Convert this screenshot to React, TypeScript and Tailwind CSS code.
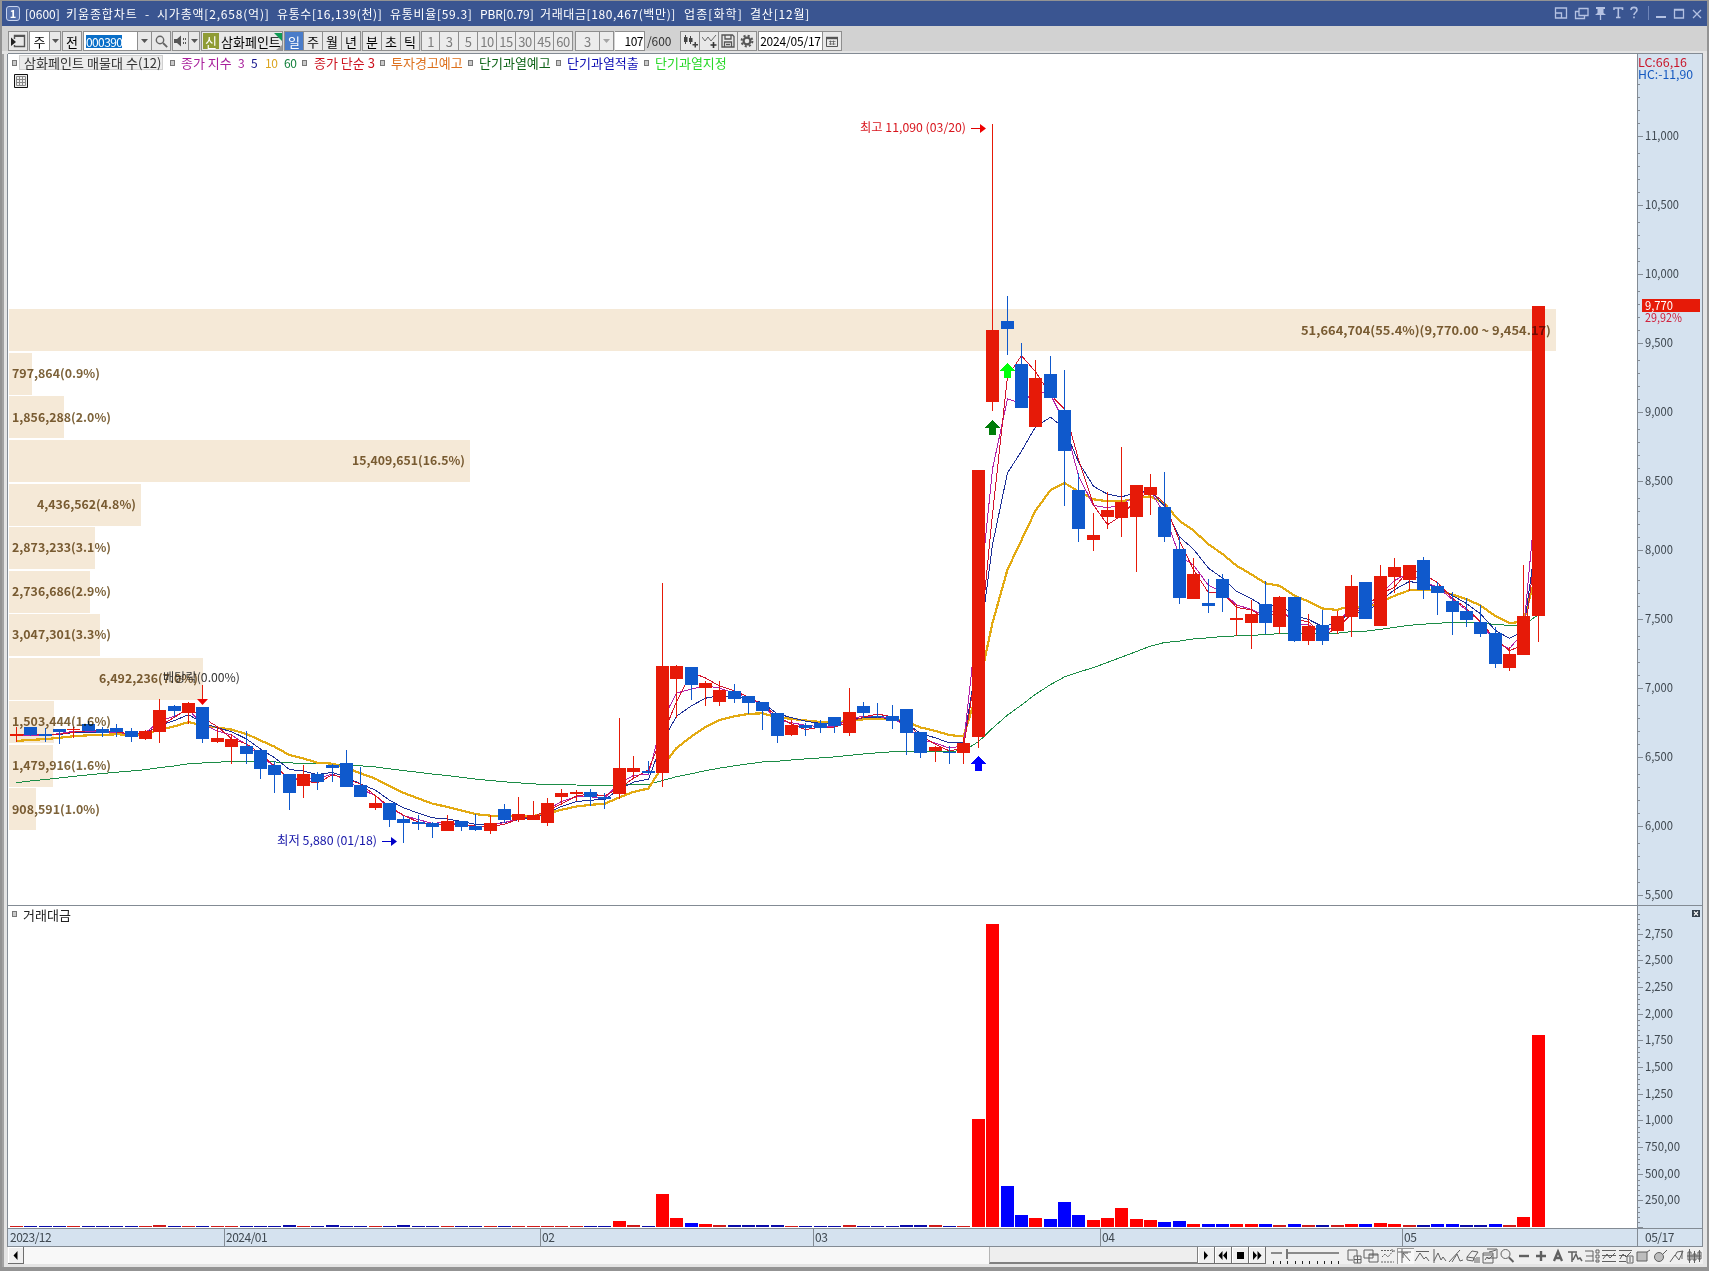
import React from "react";
import clsx from "clsx";

const UP = "#e61a08";
const DOWN = "#0f59cc";
const FONT = '"Noto Sans CJK KR", "Liberation Sans", sans-serif';

// [direction, high, top, bottom, low, turnover height]
type Row = [number, number, number, number, number, number];

const rows: Row[] = [
  [1, 727, 734, 736, 742, 1],
  [0, 727, 727, 735, 736, 1],
  [0, 728, 734, 735.5, 742, 1],
  [0, 729, 729, 732, 744, 1],
  [1, 727, 729, 730, 738, 1],
  [0, 721, 724, 731, 731, 1],
  [0, 727, 729, 733, 737, 1],
  [0, 724, 728, 732, 737, 1],
  [0, 728, 731, 737, 742, 1],
  [1, 730, 731, 739, 740, 1],
  [1, 699, 710, 732, 743, 2],
  [0, 705, 706, 711, 717, 1],
  [1, 702, 703, 713, 724, 1],
  [0, 707, 707, 739, 743, 1],
  [1, 727, 738, 742, 743, 1],
  [1, 734, 739, 747, 764, 1],
  [0, 731, 746, 754, 764, 1],
  [0, 750, 750, 769, 779, 1],
  [0, 761, 765, 775, 793, 1],
  [0, 774, 774, 793, 810, 2],
  [1, 765, 774, 786, 798, 1],
  [0, 772, 774, 782, 790, 1],
  [0, 764, 765, 768, 782, 2],
  [0, 750, 763, 787, 787, 1],
  [0, 767, 785, 797, 797, 1],
  [1, 795, 803, 808, 810, 1],
  [0, 803, 803, 820, 827, 1],
  [0, 816, 819, 823, 843, 2],
  [0, 815, 822, 824, 830, 1],
  [0, 822, 823, 827, 838, 1],
  [1, 815, 821, 831, 831, 1],
  [0, 821, 821, 827, 831, 1],
  [0, 814, 826, 830, 831, 1],
  [1, 815, 823, 831, 834, 1],
  [0, 804, 809, 820, 823, 1],
  [1, 797, 814, 820, 822, 1],
  [1, 801, 815, 820, 820, 1],
  [1, 798, 803, 823, 826, 1],
  [1, 789, 793, 797, 805, 1],
  [1, 790, 792, 794, 801, 1],
  [0, 789, 792, 797, 806, 1],
  [0, 793, 797, 799, 809, 1],
  [1, 718, 768, 794, 799, 6],
  [1, 756, 768, 772, 778, 2],
  [0, 761, 771, 773, 774, 1],
  [1, 583, 666, 773, 787, 33],
  [1, 665, 666, 679, 718, 9],
  [0, 667, 667, 685, 700, 4],
  [1, 681, 683, 688, 706, 3],
  [1, 681, 690, 702, 706, 2],
  [0, 684, 691, 699, 703, 2],
  [0, 696, 696, 703, 714, 2],
  [0, 702, 702, 711, 730, 2],
  [0, 713, 713, 736, 743, 2],
  [1, 720, 725, 735, 736, 1],
  [0, 723, 725, 728, 736, 1],
  [0, 720, 723, 728, 733, 1],
  [0, 717, 717, 726, 733, 1],
  [1, 688, 712, 733, 736, 2],
  [0, 702, 706, 713, 718, 1],
  [0, 703, 716, 717, 718, 1],
  [0, 705, 716, 721, 729, 1],
  [0, 709, 709, 733, 755, 2],
  [0, 732, 732, 753, 758, 2],
  [1, 746, 747, 751, 762, 2],
  [0, 746, 752, 753, 764, 1],
  [1, 737, 743, 753, 764, 1],
  [1, 470, 470, 737, 748, 108],
  [1, 124, 330, 402, 411, 303],
  [0, 296, 321, 329, 355, 41],
  [0, 343, 364, 408, 408, 12],
  [1, 360, 378, 427, 427, 9],
  [0, 356, 374, 398, 398, 8],
  [0, 370, 410, 451, 506, 25],
  [0, 473, 490, 529, 542, 12],
  [1, 513, 535, 540, 551, 7],
  [1, 492, 510, 517, 529, 9],
  [1, 447, 502, 518, 537, 19],
  [1, 485, 485, 517, 572, 8],
  [1, 474, 487, 495, 515, 7],
  [0, 472, 507, 537, 542, 5],
  [0, 537, 549, 598, 604, 6],
  [1, 558, 574, 599, 599, 3],
  [0, 579, 603, 606, 613, 3],
  [0, 574, 579, 598, 612, 3],
  [1, 604, 618, 620, 636, 3],
  [1, 600, 614, 623, 649, 3],
  [0, 581, 604, 623, 634, 3],
  [1, 596, 597, 627, 634, 2],
  [0, 597, 597, 641, 642, 3],
  [1, 614, 626, 641, 645, 2],
  [0, 610, 625, 641, 645, 2],
  [1, 611, 616, 631, 634, 2],
  [1, 575, 586, 617, 637, 3],
  [0, 582, 582, 619, 619, 3],
  [1, 565, 576, 626, 626, 4],
  [1, 558, 567, 577, 593, 3],
  [1, 565, 565, 580, 591, 2],
  [0, 557, 560, 590, 599, 2],
  [0, 582, 586, 593, 615, 3],
  [0, 592, 601, 612, 635, 3],
  [0, 598, 611, 620, 627, 2],
  [0, 605, 622, 634, 637, 2],
  [0, 627, 633, 664, 668, 3],
  [1, 647, 654, 668, 671, 2],
  [1, 565, 616, 655, 655, 10],
  [1, 306, 306, 616, 642, 192],
];

const xAt = (i: number) => Math.floor(16.3 + i * 14.358);
const closes = rows.map((r) => (r[0] ? r[2] : r[3]));

const ema = (n: number, start: number) => {
  let v = start;
  return closes.map((c, i) => {
    if (i > 0) v += ((c - v) * 2) / (n + 1);
    return v;
  });
};

const sma3 = closes.map((c, i) =>
  i < 2 ? c : (c + closes[i - 1] + closes[i - 2]) / 3
);

const toPoints = (vals: number[]) =>
  vals.map((v, i) => `${xAt(i) + 0.5},${v.toFixed(1)}`).join(" ");

const averages = [
  { color: "#1b8c46", width: 1, points: toPoints(ema(60, 782.6)) },
  { color: "#e3aa12", width: 2.2, points: toPoints(ema(10, 741)) },
  { color: "#1d2f96", width: 1, points: toPoints(ema(5, 736)) },
  { color: "#b321a8", width: 1, points: toPoints(ema(3, 735)) },
  { color: "#d3142c", width: 1, points: toPoints(sma3) },
];

// right edge of the bar, label, label start, label width
const profile: [number, string, number, number][] = [
  [1556, "51,664,704(55.4%)(9,770.00 ~ 9,454.17)", 1301, 250],
  [32, "797,864(0.9%)", 12, 88],
  [64, "1,856,288(2.0%)", 12, 99],
  [470, "15,409,651(16.5%)", 352, 113],
  [141, "4,436,562(4.8%)", 37, 99],
  [95, "2,873,233(3.1%)", 12, 99],
  [90, "2,736,686(2.9%)", 12, 99],
  [100, "3,047,301(3.3%)", 12, 99],
  [203, "6,492,236(7.0%)", 99, 99],
  [54, "1,503,444(1.6%)", 12, 99],
  [53, "1,479,916(1.6%)", 12, 99],
  [36, "908,591(1.0%)", 12, 88],
];

const prices = ["11,000", "10,500", "10,000", "9,500", "9,000", "8,500", "8,000", "7,500", "7,000", "6,500", "6,000", "5,500"];
const turnovers = ["2,750", "2,500", "2,250", "2,000", "1,750", "1,500", "1,250", "1,000", "750,00", "500,00", "250,00"];

const Label: React.FC<{
  x: number;
  y: number;
  w: number;
  fill: string;
  bold?: boolean;
  children: string;
}> = ({ x, y, w, fill, bold, children }) => (
  <text
    x={x}
    y={y}
    textLength={w}
    lengthAdjust="spacingAndGlyphs"
    fill={fill}
    fontSize={12}
    fontWeight={bold ? 700 : 400}
    fontFamily={FONT}
  >
    {children}
  </text>
);

const UpArrow: React.FC<{ x: number; y: number; fill: string }> = ({ x, y, fill }) => (
  <path
    d={`M${x} ${y}l7.5 7.5h-4v7h-7v-7h-4z`}
    fill={fill}
    shapeRendering="crispEdges"
  />
);

const PriceChart = () => (
  <svg width={1629} height={852} viewBox="8 54 1629 852" className="block">
    {profile.map(([right], i) => (
      <rect key={i} x={9} y={Math.round(309.3 + i * 43.55)} width={right - 9} height={42} fill="#f5e9d7" />
    ))}
    <g fill="none" shapeRendering="crispEdges">
      {averages.map((a) => (
        <polyline key={a.color} points={a.points} stroke={a.color} strokeWidth={a.width} />
      ))}
    </g>
    <g shapeRendering="crispEdges">
      {rows.map(([up, high, top, bottom, low], i) => (
        <g key={i} fill={up ? UP : DOWN}>
          <rect x={xAt(i)} y={high} width={1} height={low - high} />
          <rect x={xAt(i) - 6} y={top} width={13} height={bottom - top} />
        </g>
      ))}
    </g>
    <g style={{ mixBlendMode: "multiply" }}>
      {profile.map(([, text, x, w], i) => (
        <Label key={text} x={x} y={Math.round(334.5 + i * 43.55)} w={w} fill="#7d633a" bold>
          {text}
        </Label>
      ))}
    </g>

    <Label x={163} y={682} w={77} fill="#333">배당락(0.00%)</Label>
    <path d="M202.5 685v14" stroke={UP} />
    <path d="M197 699h11l-5.5 6z" fill="#f00000" />

    <Label x={860} y={132} w={106} fill="#d8141c">최고 11,090 (03/20)</Label>
    <path d="M971 128.5h10" stroke="#e00000" />
    <path d="M980 124v9l6-4.5z" fill="#f00000" />

    <Label x={277} y={845} w={100} fill="#1414a8">최저 5,880 (01/18)</Label>
    <path d="M382 841.5h10" stroke="#0000c8" />
    <path d="M391 837v9l6-4.5z" fill="#0000c8" />

    <UpArrow x={978.5} y={756} fill="#0000ff" />
    <UpArrow x={992.5} y={420} fill="#007d0a" />
    <UpArrow x={1007.5} y={363} fill="#00ff0a" />
  </svg>
);

const PriceAxis = () => (
  <svg width={66} height={852} viewBox="1637 54 66 852" className="block bg-[#d5e2ef]">
    <path d="M1637.5 54v852M1702.5 54v852" stroke="#838b94" />
    <Label x={1638} y={67} w={49} fill="#c81428">LC:66,16</Label>
    <Label x={1638} y={79} w={55} fill="#1458c0">HC:-11,90</Label>
    {prices.map((p, i) => {
      const y = Math.round(136.3 + i * 68.96);
      return (
        <g key={p}>
          <path d={`M1638 ${y + 0.5}h5`} stroke="#838b94" />
          {[13, 26, 39, 52].map((d) => (
            <path key={d} d={`M1638 ${y - d + 0.5}h2`} stroke="#838b94" />
          ))}
          <Label x={1645} y={y + 3.5} w={p.length > 5 ? 34 : 28} fill="#3f4850">{p}</Label>
        </g>
      );
    })}
    <rect x={1642} y={299} width={58} height={13} fill={UP} />
    <Label x={1645} y={309.5} w={28} fill="#fff">9,770</Label>
    <Label x={1645} y={321.5} w={37} fill="#d0203c">29,92%</Label>
  </svg>
);

const VolumeChart = () => (
  <svg width={1629} height={322} viewBox="8 906 1629 322" className="block" shapeRendering="crispEdges">
    {rows.map(([up, , , , , h], i) => (
      <rect
        key={i}
        x={xAt(i) - 6}
        y={1227 - h}
        width={13}
        height={h}
        fill={up ? (h < 3 ? "#cf1a1a" : "#ff0000") : h < 3 ? "#0a0aa8" : "#0000ff"}
      />
    ))}
  </svg>
);

const VolumeAxis = () => (
  <svg width={66} height={322} viewBox="1637 906 66 322" className="block bg-[#d5e2ef]">
    <path d="M1637.5 906v322M1702.5 906v322" stroke="#838b94" />
    {[...turnovers, ""].map((t, i) => {
      const y = Math.round(933.5 + i * 26.68);
      return (
        <g key={i}>
          <path d={`M1638 ${y + 0.5}h5`} stroke="#838b94" />
          {[5, 10, 15, 20].map((d) => (
            <path key={d} d={`M1638 ${y - d + 0.5}h2`} stroke="#838b94" />
          ))}
          {t && <Label x={1645} y={y + 3.5} w={t.length > 5 ? 35 : 28} fill="#3f4850">{t}</Label>}
        </g>
      );
    })}
    <rect x={1692} y={910} width={8} height={7} fill="#34404c" />
    <path d="M1694 911.5l4 4m0-4l-4 4" stroke="#fff" strokeWidth={1.1} />
  </svg>
);

const titleParts: [string, string][] = [
  ["[0600]", "w-[41px]"],
  ["키움종합차트", "w-[79px] tracking-[0.9px]"],
  ["-", "w-[12px]"],
  ["시가총액[2,658(억)]", "w-[120px] tracking-[0.8px]"],
  ["유통수[16,139(천)]", "w-[113px] tracking-[0.6px]"],
  ["유통비율[59.3]", "w-[90px] tracking-[0.7px]"],
  ["PBR[0.79]", "w-[60px] tracking-[-0.1px]"],
  ["거래대금[180,467(백만)]", "w-[144px] tracking-[0.6px]"],
  ["업종[화학]", "w-[66px] tracking-[1.1px]"],
  ["결산[12월]", "w-[66px] tracking-[0.8px]"],
];

const TitleBar = () => (
  <div className="flex h-[25px] items-center bg-[#3a5591] text-[12px] text-white">
    <div className="ml-[4px] mr-[5px] flex h-[15px] w-[14px] items-center justify-center rounded-[3px] border border-[#c9d4ee] bg-[#5671ad] text-[11px] font-bold">
      1
    </div>
    {titleParts.map(([text, cls]) => (
      <span key={text} className={clsx("shrink-0", cls)}>{text}</span>
    ))}
    <svg className="ml-auto mr-[3px]" width={150} height={18} viewBox="1555 5 150 18" fill="none" stroke="#b4c1e2" strokeWidth={1.3}>
      <path d="M1556.5 8h11v10h-11zM1556.5 13h6v5" />
      <path d="M1580 8.5h9v7h-9zM1579.500 11.500h-3v7h9v-3" />
      <path d="M1597 7h9v2h-1.500v4l2.500 2h-11l2.500-2v-4h-1.500z" fill="#b4c1e2" stroke="none" />
      <path d="M1601.500 14v6" />
      <path d="M1615 10v-2h8.500v2M1619.300 8v9.500M1617 17.500h4.500" strokeWidth={1.6} />
      <path d="M1632 10c0-3.500 6-3.500 6 0 0 2.500-3 2.500-3 5M1635 16.500v1.700" strokeWidth={1.6} />
      <path d="M1649.500 6v14" stroke="#6f85b8" strokeWidth={1} />
      <path d="M1657 17h10" strokeWidth={2} />
      <path d="M1675.500 9.500h9v8.500h-9zM1675 10h10" />
      <path d="M1694 10l8 8m0-8l-8 8" />
    </svg>
  </div>
);

const Cell: React.FC<{ className?: string; children?: React.ReactNode }> = ({ className, children }) => (
  <div
    className={clsx(
      "flex h-[20px] shrink-0 items-center justify-center border border-l-0 border-[#8e8e8e] text-[13px] leading-none text-black first:border-l",
      className
    )}
  >
    {children}
  </div>
);

const Caret: React.FC<{ light?: boolean }> = ({ light }) => (
  <svg width={7} height={4} viewBox="0 0 7 4">
    <path d="M0 0h7L3.500 4z" fill={light ? "#a5a5a5" : "#555"} />
  </svg>
);

const Toolbar = () => (
  <div className="flex h-[25px] items-start bg-[#d2d2d2] pl-[6px] pt-[5px]">
    <div className="flex w-[21px]">
      <Cell className="w-[20px] bg-[#e8e8e8]">
        <svg width={15} height={14} viewBox="0 0 15 14" fill="none" stroke="#555">
          <path d="M3.500 5V1.500h10v11h-10V11" strokeWidth={1.4} />
          <path d="M0 3.500l5 4.500-5 4z" fill="#222" stroke="none" />
          <path d="M3 2h11" strokeWidth={2} />
        </svg>
      </Cell>
    </div>
    <div className="flex w-[33px]">
      <Cell className="w-[21px] bg-white">주</Cell>
      <Cell className="w-[11px] bg-[#e8e8e8]"><Caret /></Cell>
    </div>
    <div className="flex w-[21px]">
      <Cell className="w-[20px] bg-[#e8e8e8]">전</Cell>
    </div>
    <div className="flex w-[89px]">
      <Cell className="w-[55px] justify-start bg-white pl-[2px]">
        <span className="bg-[#0a6fc8] text-[12px] leading-[13px] tracking-[-0.6px] text-white">000390</span>
      </Cell>
      <Cell className="w-[14px] bg-[#e8e8e8]"><Caret /></Cell>
      <Cell className="w-[19px] bg-[#e8e8e8]">
        <svg width={13} height={13} viewBox="0 0 13 13" fill="none" stroke="#666" strokeWidth={1.4}>
          <circle cx={5} cy={5} r={3.700} />
          <path d="M8 8l4.200 4.200" strokeWidth={1.800} />
        </svg>
      </Cell>
    </div>
    <div className="flex w-[29px]">
      <Cell className="w-[17px] bg-[#e8e8e8]">
        <svg width={13} height={12} viewBox="0 0 13 12" fill="#555">
          <path d="M0 4h3l4-3.500v11L3 8H0z" />
          <path d="M9 3h1v2H9zM11 3h1v2h-1zM9 7h1v2H9zM11 7h1v2h-1z" />
        </svg>
      </Cell>
      <Cell className="w-[11px] bg-[#e8e8e8]"><Caret /></Cell>
    </div>
    <div className="flex w-[83px]">
      <Cell className="relative w-[82px] justify-start bg-[#e8e8e8] pl-px">
        <span className="mr-[2px] flex h-[16px] w-[16px] items-center justify-center bg-[#8f9c35] text-white">신</span>
        <span className="whitespace-nowrap">삼화페인트</span>
        <svg className="absolute right-0 top-px" width={8} height={17} viewBox="0 0 8 17">
          <path d="M0 0h8v8z" fill="#0f9a54" />
          <path d="M8 12v5H2z" fill="#999" />
        </svg>
      </Cell>
    </div>
    <div className="flex w-[78px]">
      <Cell className="w-[20px] border-[#4a7cc9] bg-[#4a7cc9] text-white">일</Cell>
      <Cell className="w-[19px] bg-[#e8e8e8]">주</Cell>
      <Cell className="w-[19px] bg-[#e8e8e8]">월</Cell>
      <Cell className="w-[19px] bg-[#e8e8e8]">년</Cell>
    </div>
    <div className="flex w-[59px]">
      <Cell className="w-[20px] bg-[#e8e8e8]">분</Cell>
      <Cell className="w-[19px] bg-[#e8e8e8]">초</Cell>
      <Cell className="w-[19px] bg-[#e8e8e8]">틱</Cell>
    </div>
    <div className="flex w-[154px]">
      {["1", "3", "5", "10", "15", "30", "45", "60"].map((n) => (
        <Cell key={n} className="w-[19px] bg-[#ececec] text-[12px] tracking-[-0.5px] text-[#7d7d7d]!">{n}</Cell>
      ))}
    </div>
    <div className="flex w-[40px]">
      <Cell className="w-[25px] bg-[#ececec] text-[12px] text-[#7d7d7d]!">3</Cell>
      <Cell className="w-[14px] bg-[#ececec]"><Caret light /></Cell>
    </div>
    <Cell className="w-[30px] justify-end border-l bg-white pr-[1px] text-[12px]! tracking-[-0.5px]">107</Cell>
    <span className="w-[35px] pl-[2px] text-[12px] leading-[19px] tracking-[-0.1px] text-[#333]">/600</span>
    <div className="flex w-[78px]">
      <Cell className="w-[20px] bg-[#e8e8e8]">
        <svg width={15} height={15} viewBox="0 0 15 15" fill="#444">
          <path d="M1 3h3.500v5H1zM2 1h1v9H2zM6 4h3.500v4H6zM7 2h1v8H7zM9.500 10h2V8h1.500v2h2v1.500h-2v2h-1.500v-2h-2z" />
        </svg>
      </Cell>
      <Cell className="w-[19px] bg-[#e8e8e8]">
        <svg width={15} height={15} viewBox="0 0 15 15" fill="none" stroke="#666">
          <path d="M0 3l3 4 3-4 3 4 5-6" />
          <path d="M11.500 8v6M8.500 11h6" stroke="#333" strokeWidth={1.600} />
        </svg>
      </Cell>
      <Cell className="w-[19px] bg-[#e8e8e8]">
        <svg width={14} height={14} viewBox="0 0 14 14" fill="none" stroke="#555" strokeWidth={1.300}>
          <path d="M1 1h10.500L13 2.500V13H1zM4 1v4h6V1M3.500 13V8h7v5M5 10.500h4" />
        </svg>
      </Cell>
      <Cell className="w-[19px] bg-[#e8e8e8]">
        <svg width={14} height={14} viewBox="0 0 14 14" fill="none" stroke="#555">
          <circle cx={7} cy={7} r={3.400} strokeWidth={2.200} />
          <circle cx={7} cy={7} r={5.400} strokeWidth={2} strokeDasharray="2.120 2.120" />
        </svg>
      </Cell>
    </div>
    <div className="flex">
      <Cell className="w-[65px] bg-white text-[12px]! tracking-[-0.2px]">2024/05/17</Cell>
      <Cell className="w-[19px] bg-[#e8e8e8]">
        <svg width={12} height={11} viewBox="0 0 12 11" fill="none" stroke="#555">
          <path d="M.5 1.500h11v9H.5z" />
          <path d="M3 5.500h6.500M3 8h6.500M4.500 4.500v4.500M7.500 4.500v4.500" strokeWidth={0.7} />
          <path d="M0 2h12" strokeWidth={2.400} />
        </svg>
      </Cell>
    </div>
  </div>
);

const Marker: React.FC<{ className: string }> = ({ className }) => (
  <i className={clsx("block h-[6px] w-[5px] shrink-0 border border-[#777] bg-[#c9c9c9]", className)} />
);

const Legend = () => (
  <div className="absolute left-[4px] top-0 flex h-[17px] items-center whitespace-nowrap text-[13px] leading-none">
    <Marker className="mr-[2px]" />
    <span className="flex h-[15px] w-[144px] items-center border border-[#cfcfcf] bg-[#ececec] pl-[4px] tracking-[0.05px] text-[#333]">
      삼화페인트 매물대 수(12)
    </span>
    <Marker className="ml-[7px] mr-[6px]" />
    <span className="w-[57px] text-[#a8209c]">종가 지수</span>
    <span className="w-[13px] text-[12px] text-[#a8209c]">3</span>
    <span className="w-[14px] text-[12px] text-[#14148c]">5</span>
    <span className="w-[19px] text-[12px] tracking-[-0.5px] text-[#dba520]">10</span>
    <span className="w-[18px] text-[12px] tracking-[-0.5px] text-[#12803c]">60</span>
    <Marker className="mr-[7px]" />
    <span className="w-[66px] text-[#cc1420]">종가 단순 3</span>
    <Marker className="mr-[6px]" />
    <span className="w-[77px] text-[#dd701c]">투자경고예고</span>
    <Marker className="mr-[6px]" />
    <span className="w-[77px] text-[#0f6418]">단기과열예고</span>
    <Marker className="mr-[6px]" />
    <span className="w-[77px] text-[#0f0fb4]">단기과열적출</span>
    <Marker className="mr-[6px]" />
    <span className="text-[#28d828]">단기과열지정</span>
  </div>
);

const TimeAxis = () => (
  <div className="flex h-[19px] border-y border-[#838b94] bg-[#d5e2ef] text-[12px] leading-[15px] tracking-[-0.5px] text-[#3f4850] [&>span]:shrink-0 [&>span]:pl-px [&>span+span]:border-l [&>span+span]:border-[#838b94]">
    <span className="w-[216px] pl-[2px]!">2023/12</span>
    <span className="w-[316px]">2024/01</span>
    <span className="w-[273px]">02</span>
    <span className="w-[287px]">03</span>
    <span className="w-[302px]">04</span>
    <span className="w-[235px]">05</span>
    <span className="w-[66px] border-r border-r-[#838b94] pl-[7px]!">05/17</span>
  </div>
);

const tools = [
  <path d="M2 2h9v6M2 2v10h5M8 8h7v7H8zM8 11.500h7M11.500 8v7" />,
  <path d="M1 2h9v8H1zM6 6h9v8H6zM6 7h9" />,
  <path d="M1 2.500h10M1 14h13M2 9l3-3 3 3 5-6M11 2h3v3" strokeDasharray="2 1" />,
  <path d="M1 4h13M5 1v14M6 5l7 8M6 5v5M6 5h5" />,
  <path d="M2 3.500h13M1 13l5-8 4 6 2-2 3 4" />,
  <path d="M3 1v14M3 13l4-8 3 7 2-3 3 4" />,
  <path d="M1 14L12 2M4 14l5-8 3 7 3-1" />,
  <path d="M2 9l5-6 6 1-4 6zM2 9v3l6 1 1-3M10 10v5M12 9v6M14 9v6" />,
  <path d="M5 1h10v9H5M1 5h10v10H1zM1 7h10M3 12l2-3 2 2 3-3M7 4l4-1 3-1" />,
  <g><circle cx={6.500} cy={6} r={4.500} /><path d="M10 9.500l4.500 4.500" strokeWidth={2} /></g>,
  <path d="M3 8h10" strokeWidth={2.400} />,
  <path d="M3 8h10M8 3v10" strokeWidth={2.400} />,
  <path d="M4 13L8 3.500 12 13M5.500 10h5" strokeWidth={2.300} />,
  <path d="M1 4h9M5 4v10M6 12l3-6 2 5 2-1 2 3" strokeWidth={1.500} />,
  <path d="M1 3h8M2 8h7M1 13h9M9 3v10M12 2h3v3h-3zM12 7h3v3h-3zM12 12h3v2h-3z" />,
  <path d="M1 2.500h14M1 7.500h14M1 13.500h14M2 11l4-5 3 4 5-5" />,
  <path d="M1 2.500h13M1 7.500h7M1 13.500h7M2 11l3-5 3 3 5-5M9 8h6v7H9zM12 9v5" />,
  <path d="M2 4h10v9H2zM12 4l3-2" fill="#bdbdbd" />,
  <g><circle cx={7} cy={9} r={4.500} fill="#bdbdbd" /><path d="M11 6l4-4" /></g>,
  <path d="M1 14l5-7 4 5 4-9-6 1-2 4M13 3v8" />,
  <path d="M2 4h3v8H2zM3.500 1v14M7 6h3v6H7zM8.500 3v12M12 4h3v7h-3zM13.500 2v12M1 8h14" />,
];

const ScrollButton: React.FC<{ className?: string; d: string }> = ({ className, d }) => (
  <div className={clsx("flex h-[17px] shrink-0 items-center justify-center border-b border-r border-[#6e6e6e] bg-[#f0f0f0] shadow-[inset_1px_1px_0_#fff]", className)}>
    <svg width={10} height={9} viewBox="0 0 10 9"><path d={d} fill="#000" /></svg>
  </div>
);

const BottomBar = () => (
  <div className="flex h-[17px] bg-[#efefef]">
    <ScrollButton className="w-[16px]" d="M6.500 0v9L2.500 4.500z" />
    <div className="w-[965px] shrink-0 bg-[#f8f8f8]" />
    <div className="w-[209px] shrink-0 border-b-2 border-l border-r border-[#808080] border-l-[#b5b5b5] bg-[#eeeeee]" />
    <ScrollButton className="w-[17px]" d="M3 0v9l4-4.500z" />
    <ScrollButton className="w-[17px]" d="M4.500 0v9L.5 4.500zM9 0v9L5 4.500z" />
    <ScrollButton className="w-[17px]" d="M2 1h7v7H2z" />
    <ScrollButton className="w-[17px]" d="M1 0v9l4-4.500zM5.500 0v9l4-4.500z" />
    <svg className="ml-[5px] shrink-0" width={75} height={17} viewBox="0 0 75 17" shapeRendering="crispEdges">
      <path d="M0 5.500h68" stroke="#8a8a8a" strokeWidth={2} />
      <path d="M11 2h5v10h-5z" fill="#f0f0f0" />
      <path d="M15.500 2v10" stroke="#777" strokeWidth={2} />
      <path d="M2.500 14v3M9.500 14v3M16.500 14v3M24.500 14v3M31.500 14v3M38.500 14v3M46.500 14v3M53.500 14v3M60.500 14v3M67.500 14v3" stroke="#222" />
    </svg>
    <div className="flex w-[357px] items-center">
      {tools.map((icon, i) => (
        <svg key={i} className={clsx("h-[16px] w-[17px] shrink-0", i === 3 && "bg-[#f8f8f8] shadow-[inset_1px_1px_0_#999]")} viewBox="0 0 17 16" fill="none" stroke="#606060">
          {icon}
        </svg>
      ))}
    </div>
  </div>
);

export default function App() {
  return (
    <div
      className={
        "flex h-[1271px] w-[1709px] flex-col overflow-hidden border-x-2 border-b-4 border-t border-[#939393] bg-[#e4e4e4] font-['Noto_Sans_CJK_KR','Liberation_Sans',sans-serif]"
      }
    >
      <TitleBar />
      <Toolbar />
      <div className="mt-[3px] flex flex-1 flex-col border-l-2 border-[#a2a2a2] pl-[4px]">
        <div className="w-[1695px] bg-white shadow-[0_-1px_0_#838b94,-1px_0_0_#838b94]">
          <div className="relative flex">
            <PriceChart />
            <PriceAxis />
            <Legend />
            <svg className="absolute left-[6px] top-[20px]" width={14} height={14} viewBox="0 0 14 14" fill="none">
              <path d="M.5.5h13v13H.5z" stroke="#111" fill="#eee" />
              <path d="M2.500 2.500h9v9h-9zM5.500 2v10M8.500 2v10M2 5.500h10M2 8.500h10" stroke="#888" />
            </svg>
          </div>
          <div className="relative flex shadow-[0_-1px_0_#838b94]">
            <VolumeChart />
            <VolumeAxis />
            <div className="absolute left-[4px] top-0 flex h-[16px] items-center text-[13px] leading-none text-[#222]">
              <Marker className="mr-[6px]" />
              거래대금
            </div>
          </div>
          <TimeAxis />
        </div>
        <div className="w-[1695px]">
          <BottomBar />
        </div>
      </div>
    </div>
  );
}
